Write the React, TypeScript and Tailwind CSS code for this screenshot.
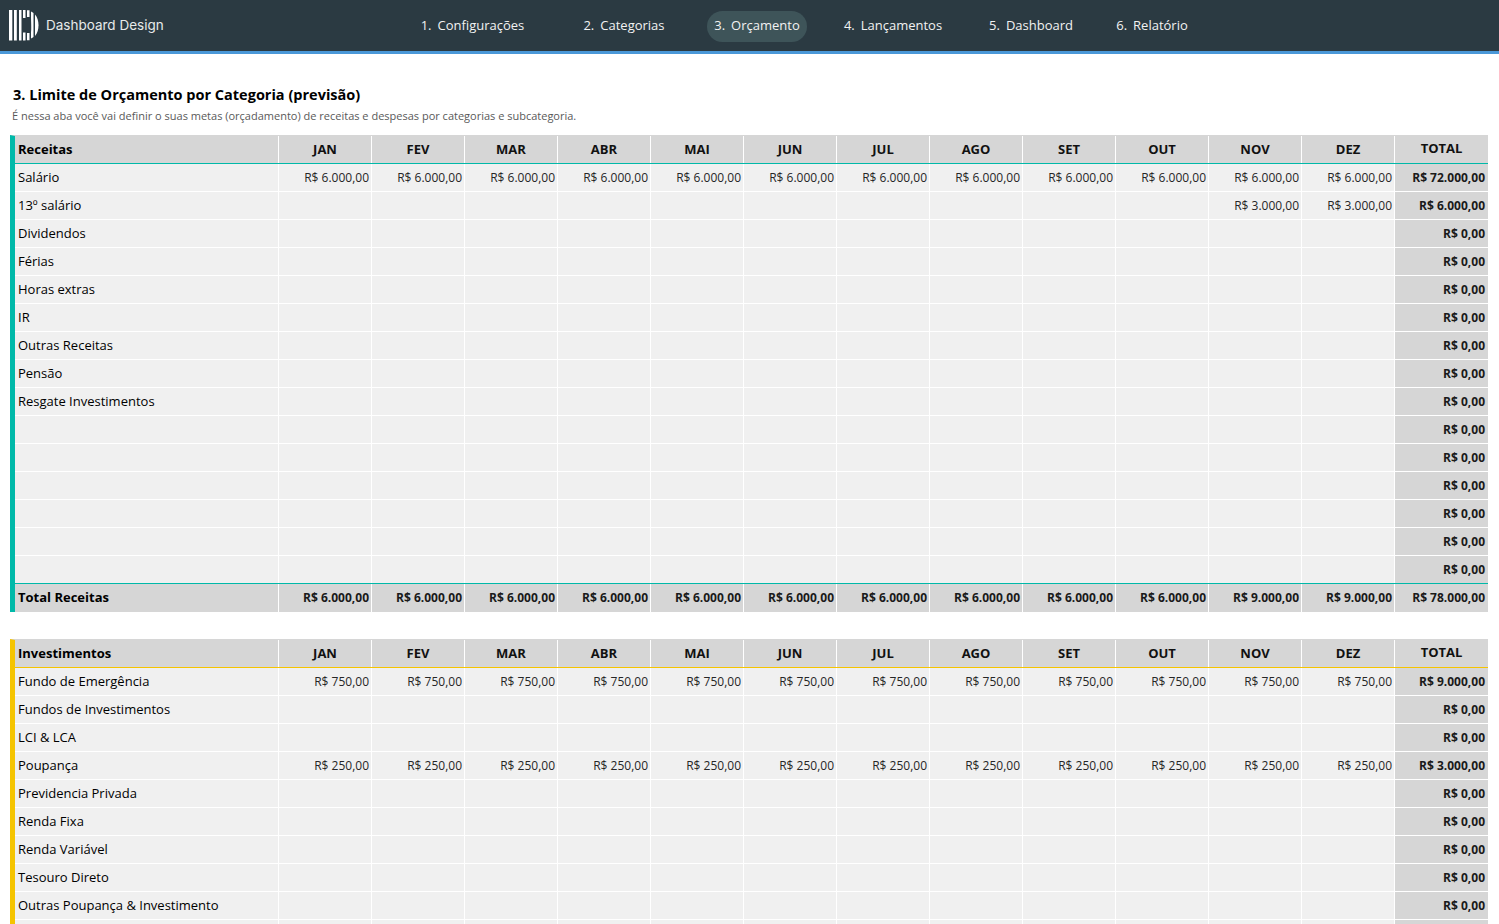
const months = ["JAN", "FEV", "MAR", "ABR", "MAI", "JUN", "JUL", "AGO", "SET", "OUT", "NOV", "DEZ"];

const navItems = [
  { num: "1.", label: "Configurações", className: "ml-[279px] w-[115px]" },
  { num: "2.", label: "Categorias", className: "ml-[45px] w-[98px]" },
  { num: "3.", label: "Orçamento", className: "ml-[34px] w-[100px]", active: true },
  { num: "4.", label: "Lançamentos", className: "ml-[30px] w-[112px]" },
  { num: "5.", label: "Dashboard", className: "ml-[33px] w-[98px]" },
  { num: "6.", label: "Relatório", className: "ml-[28px] w-[88px]" },
];

const gridCols = "grid grid-cols-[264px_repeat(13,93px)]";

type RowData = { label: string; values?: (string | null)[]; total: string };

const fill = (v: string): string[] => months.map(() => v);

const receitas: RowData[] = [
  { label: "Salário", values: fill("R$ 6.000,00"), total: "R$ 72.000,00" },
  {
    label: "13º salário",
    values: [null, null, null, null, null, null, null, null, null, null, "R$ 3.000,00", "R$ 3.000,00"],
    total: "R$ 6.000,00",
  },
  { label: "Dividendos", total: "R$ 0,00" },
  { label: "Férias", total: "R$ 0,00" },
  { label: "Horas extras", total: "R$ 0,00" },
  { label: "IR", total: "R$ 0,00" },
  { label: "Outras Receitas", total: "R$ 0,00" },
  { label: "Pensão", total: "R$ 0,00" },
  { label: "Resgate Investimentos", total: "R$ 0,00" },
  { label: "", total: "R$ 0,00" },
  { label: "", total: "R$ 0,00" },
  { label: "", total: "R$ 0,00" },
  { label: "", total: "R$ 0,00" },
  { label: "", total: "R$ 0,00" },
  { label: "", total: "R$ 0,00" },
];

const totalReceitas = [...fill("R$ 6.000,00").slice(0, 10), "R$ 9.000,00", "R$ 9.000,00"];

const investimentos: RowData[] = [
  { label: "Fundo de Emergência", values: fill("R$ 750,00"), total: "R$ 9.000,00" },
  { label: "Fundos de Investimentos", total: "R$ 0,00" },
  { label: "LCI & LCA", total: "R$ 0,00" },
  { label: "Poupança", values: fill("R$ 250,00"), total: "R$ 3.000,00" },
  { label: "Previdencia Privada", total: "R$ 0,00" },
  { label: "Renda Fixa", total: "R$ 0,00" },
  { label: "Renda Variável", total: "R$ 0,00" },
  { label: "Tesouro Direto", total: "R$ 0,00" },
  { label: "Outras Poupança & Investimento", total: "R$ 0,00" },
  { label: "", total: "R$ 0,00" },
];

function Logo() {
  return (
    <svg width="30" height="31" viewBox="0 0 30 31" className="shrink-0">
      <rect x="0" y="0" width="3.3" height="30.5" fill="#fff" />
      <rect x="5" y="0" width="2.8" height="30.5" fill="#fff" />
      <path d="M10 0h2.5v30.5h-2.5z" fill="#fff" />
      <path d="M14 0h2.5v8h-2.500z M14 22.500h2.500v8h-2.500z" fill="#fff" />
      <path d="M18 0.200h2.500v6.800h-2.500z M18 23h2.500v7.300h-2.500z" fill="#fff" />
      <path d="M22 1.500c1 .4 1.900 1 2.500 1.500v24c-.6.600-1.500 1.200-2.500 1.600v-6.600c.6-1.500 0-14 0-14z" fill="#fff" />
      <path d="M26 4.500c2.400 2.700 3.500 6.500 3.500 10.700s-1.100 8-3.500 10.700z" fill="#fff" />
    </svg>
  );
}

function HeaderRow({ title, lineClass, barClass }: { title: string; lineClass: string; barClass: string }) {
  return (
    <div className={`flex h-[29px] border-t border-t-[#d6d6d6] ${barClass}`}>
      <div className={`${gridCols} h-full border-b ${lineClass} bg-[#d6d6d6]`}>
        <div className="flex items-center border-r border-white pl-[3px] font-bold text-black">{title}</div>
        {months.map((m) => (
          <div key={m} className="flex items-center justify-center border-r border-white font-bold text-[#111]">
            {m}
          </div>
        ))}
        <div className="flex items-center justify-center pb-[2px] font-bold text-[#111]">TOTAL</div>
      </div>
    </div>
  );
}

function DataRow({ row, barClass, last, lineClass }: { row: RowData; barClass: string; last?: boolean; lineClass: string }) {
  return (
    <div className={`flex h-[28px] ${barClass}`}>
      <div className={`${gridCols} h-full border-b bg-[#f0f0f0] ${last ? lineClass : "border-b-white"}`}>
        <div className="flex items-center border-r border-white pl-[3px] text-black">{row.label}</div>
        {months.map((m, i) => (
          <div key={m} className="flex items-center justify-end border-r border-white pr-[2px] text-[12px] text-[#262626]">
            {row.values?.[i] ?? ""}
          </div>
        ))}
        <div className="flex items-center justify-end bg-[#d6d6d6] pr-[3px] text-[12px] font-bold text-[#1a1a1a]">
          {row.total}
        </div>
      </div>
    </div>
  );
}

function TotalRow({ title, values, total, barClass }: { title: string; values: string[]; total: string; barClass: string }) {
  return (
    <div className={`flex h-[28px] ${barClass}`}>
      <div className={`${gridCols} h-full bg-[#d6d6d6]`}>
        <div className="flex items-center border-r border-white pb-px pl-[3px] font-bold text-black">{title}</div>
        {values.map((v, i) => (
          <div key={i} className="flex items-center justify-end border-r border-white pr-[2px] text-[12px] font-bold text-[#1a1a1a]">
            {v}
          </div>
        ))}
        <div className="flex items-center justify-end pr-[3px] text-[12px] font-bold text-[#1a1a1a]">{total}</div>
      </div>
    </div>
  );
}

export default function App() {
  const teal = "border-l-[5px] border-l-[#00b9a9] w-[1478px]";
  const yellow = "border-l-[5px] border-l-[#f5c400] w-[1478px]";

  return (
    <div className="h-screen overflow-hidden bg-white font-['Open_Sans',sans-serif] text-[13px]">
      <header className="flex h-[54px] items-center border-b-[3px] border-b-[#4a98d8] bg-[#2b3a42]">
        <div className="ml-[9px] flex w-[163px] items-center gap-[7px]">
          <Logo />
          <span className="font-['Inter',sans-serif] text-[13.5px] leading-none text-[#e8eaea]">Dashboard Design</span>
        </div>
        <nav className="-ml-[36px] flex items-center pt-px">
          {navItems.map((item) => (
            <div
              key={item.num}
              className={`flex h-[31px] items-center justify-center rounded-full text-[#f2f2f2] ${item.className} ${
                item.active ? "bg-[#3e5459]" : ""
              }`}
            >
              <span className="mr-[6px]">{item.num}</span>
              {item.label}
            </div>
          ))}
        </nav>
      </header>

      <main className="pl-[10px]">
        <h1 className="mt-[30px] ml-[3px] text-[14.5px] leading-[22px] font-bold text-black">
          3. Limite de Orçamento por Categoria (previsão)
        </h1>
        <p className="mt-[1px] ml-[2px] mb-[10px] text-[11px] leading-[18px] text-[#595959]">
          É nessa aba você vai definir o suas metas (orçadamento) de receitas e despesas por categorias e subcategoria.
        </p>

        <section>
          <HeaderRow title="Receitas" lineClass="border-b-[#00b9a9]" barClass={teal} />
          {receitas.map((row, i) => (
            <DataRow
              key={i}
              row={row}
              barClass={teal}
              last={i === receitas.length - 1}
              lineClass="border-b-[#00b9a9]"
            />
          ))}
          <TotalRow title="Total Receitas" values={totalReceitas} total="R$ 78.000,00" barClass={teal} />
        </section>

        <section className="mt-[27px]">
          <HeaderRow title="Investimentos" lineClass="border-b-[#f5c400]" barClass={yellow} />
          {investimentos.map((row, i) => (
            <DataRow key={i} row={row} barClass={yellow} lineClass="border-b-[#f5c400]" />
          ))}
        </section>
      </main>
    </div>
  );
}
